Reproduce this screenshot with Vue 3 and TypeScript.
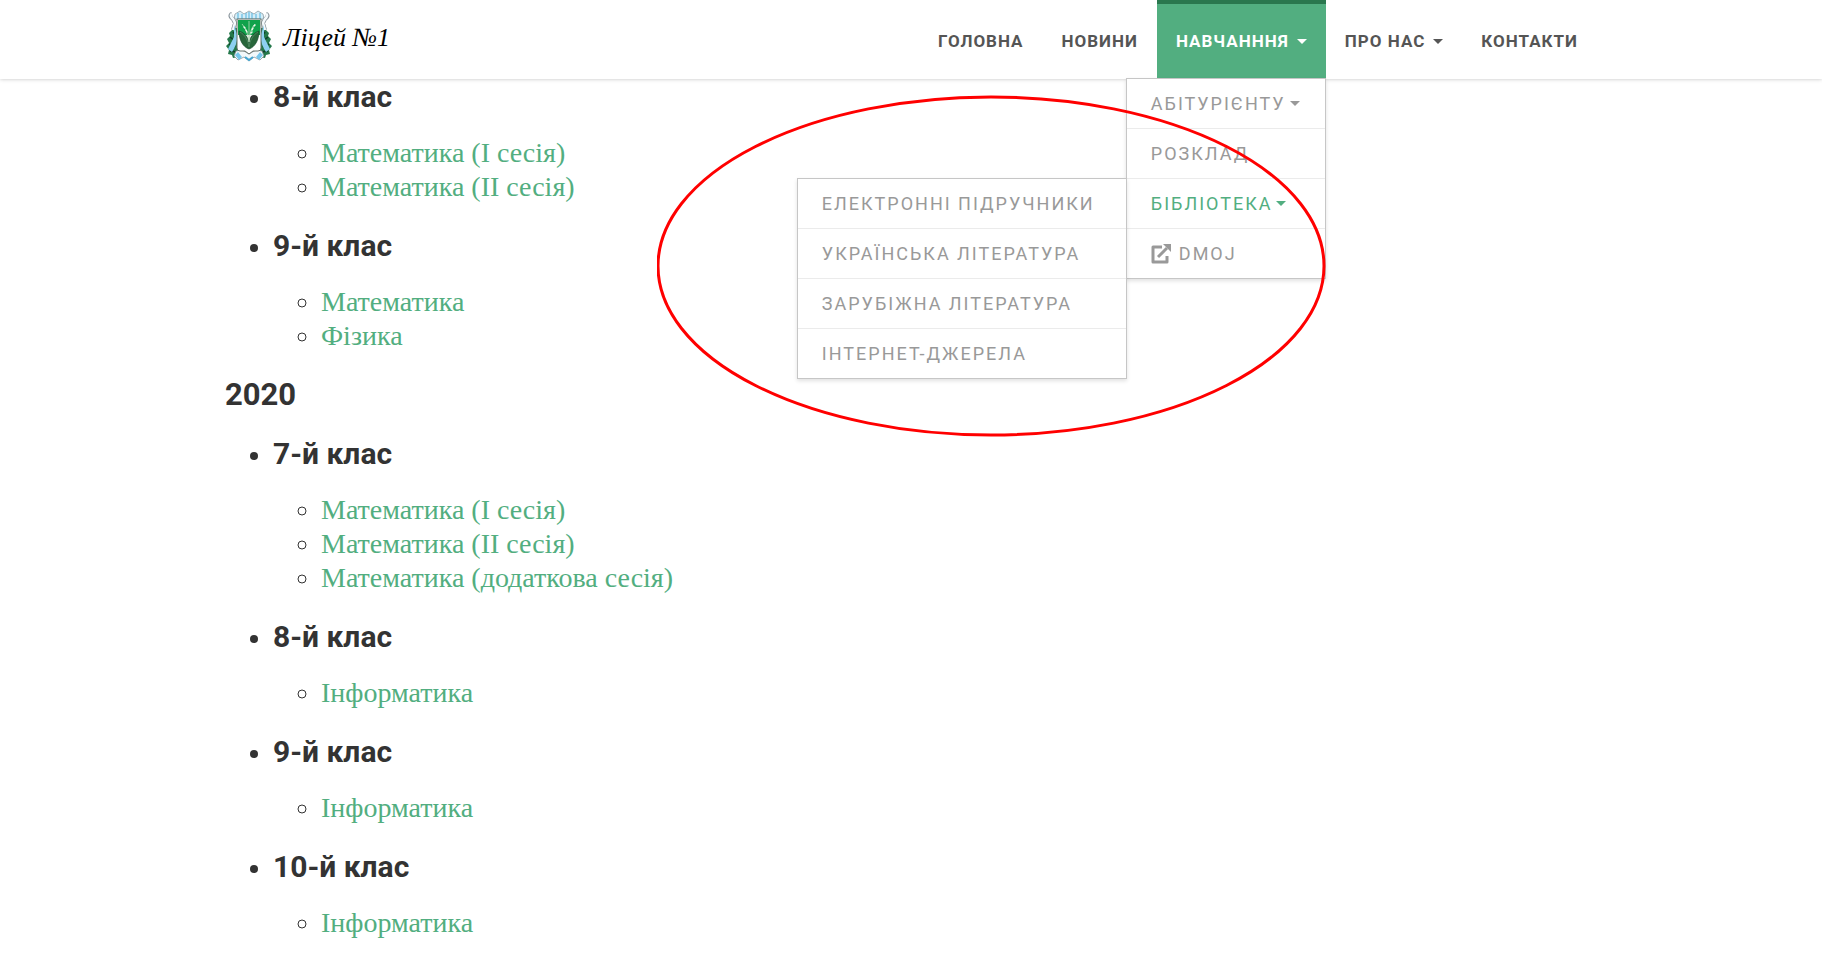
<script setup lang="ts">
interface NavItem {
  label: string
  caret?: boolean
  active?: boolean
}
interface MenuItem {
  label: string
  caret?: boolean
  open?: boolean
  external?: boolean
}
interface Grade {
  title: string
  subjects: string[]
}

const nav: NavItem[] = [
  { label: 'ГОЛОВНА' },
  { label: 'НОВИНИ' },
  { label: 'НАВЧАНННЯ', caret: true, active: true },
  { label: 'ПРО НАС', caret: true },
  { label: 'КОНТАКТИ' },
]

const menu: MenuItem[] = [
  { label: 'АБІТУРІЄНТУ', caret: true },
  { label: 'РОЗКЛАД' },
  { label: 'БІБЛІОТЕКА', caret: true, open: true },
  { label: 'DMOJ', external: true },
]

const library: string[] = [
  'ЕЛЕКТРОННІ ПІДРУЧНИКИ',
  'УКРАЇНСЬКА ЛІТЕРАТУРА',
  'ЗАРУБІЖНА ЛІТЕРАТУРА',
  'ІНТЕРНЕТ-ДЖЕРЕЛА',
]

const previous: Grade[] = [
  { title: '8-й клас', subjects: ['Математика (І сесія)', 'Математика (ІІ сесія)'] },
  { title: '9-й клас', subjects: ['Математика', 'Фізика'] },
]

const current: Grade[] = [
  { title: '7-й клас', subjects: ['Математика (І сесія)', 'Математика (ІІ сесія)', 'Математика (додаткова сесія)'] },
  { title: '8-й клас', subjects: ['Інформатика'] },
  { title: '9-й клас', subjects: ['Інформатика'] },
  { title: '10-й клас', subjects: ['Інформатика'] },
]
</script>

<template>
  <header class="header">
    <div class="container bar">
      <a class="brand" href="#">
        <svg class="crest" viewBox="0 0 48 52" aria-hidden="true">
          <path d="M9 18 4 23l1 3-3 3 2 4-3 3 3 4-1 4 4 1 1 3 5-1 3 2V18zM39 18l5 5-1 3 3 3-2 4 3 3-3 4 1 4-4 1-1 3-5-1-3 2V18z" fill="#24784a" />
          <path d="M5 27l5 4M4 34l6 3M5 41l7 1M43 27l-5 4M44 34l-6 3M43 41l-7 1M8 22l3 4M40 22l-3 4" stroke="#0f4029" stroke-width="1.5" />
          <path d="M10 4 15 1l4 3 5-3 5 3 4-3 5 3 1 5H9z" fill="#d5eef8" stroke="#8e9ea5" stroke-width=".8" />
          <path d="M13 3v6M17 4v5M21 3v6M24 2v7M27 3v6M31 4v5M35 3v6" stroke="#68bde3" stroke-width="1.2" />
          <path d="M7 4c-3 1-1 4 1 5l2 4-2 7M41 4c3 1 1 4-1 5l-2 4 2 7" fill="none" stroke="#89939a" stroke-width="4" />
          <path d="M7 4c-2 1-1 3 1 5l2 4-2 7M41 4c2 1 1 3-1 5l-2 4 2 7" fill="none" stroke="#f5fafc" stroke-width="2.6" />
          <path d="M9 15v12l-6 12 4 3c4-6 6-12 5-18zM39 15v12l6 12-4 3c-4-6-6-12-5-18z" fill="#8dd0f1" />
          <path d="M11 41l6-1 7 4 7-4 6 1 2 5-4 4-6-3-5 4-5-4-6 3-4-4z" fill="#f2f8fa" stroke="#78858c" stroke-width=".7" />
          <path d="M10 45l4 5 3-3-4-5zM38 45l-4 5-3-3 4-5z" fill="#76c6eb" />
          <path d="M12 9h24v29q0 3-3 3h-5l-4 3-4-3h-5q-3 0-3-3z" fill="#fff" stroke="#657169" />
          <path d="M13 10h22v15H13z" fill="#10a24b" />
          <path d="M14 21c6 2 9 6 10 12 1-6 4-10 10-12 0 9-4 16-10 18-6-2-10-9-10-18z" fill="#28663b" stroke="#154b2b" stroke-width=".7" />
          <path d="M24 37c-1-7-4-12-9-15M24 37c1-7 4-12 9-15" fill="none" stroke="#57916a" stroke-width=".7" />
          <path d="M24 32c-1-8-3-13-7-18M24 32c1-9 2-14 6-18M24 30V11" fill="none" stroke="#b5dab7" stroke-width=".8" />
          <path d="M19 17l1 1M21 20l1 2M30 15l-1 1M28 18l-1 2M27 22l-1 1" stroke="#e9f7ea" stroke-width="1.5" stroke-linecap="round" />
          <path d="M20 47l4 3 4-3" fill="none" stroke="#46a7d2" stroke-width="2" />
        </svg>
        <span class="brand-name">Ліцей №1</span>
      </a>
      <nav class="nav">
        <div v-for="item in nav" :key="item.label" class="nav-item">
          <a class="nav-link" :class="{ active: item.active }" href="#">
            {{ item.label }}<span v-if="item.caret" class="caret" />
          </a>
          <template v-if="item.active">
            <ul class="menu">
              <li v-for="entry in menu" :key="entry.label" class="menu-row">
                <a class="menu-link" :class="{ open: entry.open }" href="#">
                  <svg v-if="entry.external" class="external" viewBox="0 0 20 20" aria-hidden="true">
                    <path d="M11 3H2v15h14v-6" fill="none" stroke="currentColor" stroke-width="3" stroke-linejoin="round" />
                    <path d="M7 13 16 4" fill="none" stroke="currentColor" stroke-width="3" />
                    <path d="M12 0h8v8z" fill="currentColor" />
                  </svg>{{ entry.label }}<span v-if="entry.caret" class="caret" />
                </a>
                <ul v-if="entry.open" class="menu submenu">
                  <li v-for="book in library" :key="book" class="menu-row">
                    <a class="menu-link" href="#">{{ book }}</a>
                  </li>
                </ul>
              </li>
            </ul>
            <svg class="marker" viewBox="0 0 669 342" aria-hidden="true">
              <ellipse cx="334" cy="171" rx="333" ry="169" fill="none" stroke="#f00" stroke-width="3" />
            </svg>
          </template>
        </div>
      </nav>
    </div>
  </header>

  <main class="container content">
    <ul class="grades">
      <li v-for="grade in previous" :key="grade.title">
        <h3 class="grade">{{ grade.title }}</h3>
        <ul class="subjects">
          <li v-for="subject in grade.subjects" :key="subject"><a href="#">{{ subject }}</a></li>
        </ul>
      </li>
    </ul>
    <h2 class="year">2020</h2>
    <ul class="grades">
      <li v-for="grade in current" :key="grade.title">
        <h3 class="grade">{{ grade.title }}</h3>
        <ul class="subjects">
          <li v-for="subject in grade.subjects" :key="subject"><a href="#">{{ subject }}</a></li>
        </ul>
      </li>
    </ul>
  </main>
</template>

<style>
body {
  margin: 0;
  background: #fff;
}
</style>

<style scoped>
a {
  text-decoration: none;
}
ul {
  margin: 0;
}
.container {
  margin: 0 225px;
}
.header {
  position: relative;
  z-index: 1;
  background: #fff;
  box-shadow: 0 0 4px rgba(0, 0, 0, 0.25);
}
.bar {
  display: flex;
  justify-content: space-between;
  align-items: flex-start;
}
.brand {
  display: flex;
  align-items: flex-start;
  gap: 10px;
  padding-top: 10px;
  color: #000;
}
.crest {
  width: 48px;
  height: 52px;
}
.brand-name {
  font: italic 26px/56px "Liberation Serif", serif;
}
.nav {
  display: flex;
}
.nav-item {
  position: relative;
}
.nav-link {
  display: flex;
  align-items: center;
  padding: 0 19px;
  border-top: 4px solid transparent;
  font: 700 17px/75px Roboto, sans-serif;
  letter-spacing: 1px;
  color: #555;
}
.nav-link.active {
  border-top-color: #2a774e;
  background: #52ae80;
  color: #fff;
}
.caret {
  border: 5px solid transparent;
  border-top-color: currentColor;
  border-bottom: 0;
}
.nav-link .caret {
  margin-left: 8px;
}
.menu {
  position: absolute;
  top: 78px;
  right: 0;
  box-sizing: border-box;
  min-width: 200px;
  padding: 0;
  border: 1px solid #c6c6c6;
  background: #fff;
  box-shadow: 0 2px 4px rgba(0, 0, 0, 0.12);
  list-style: none;
}
.submenu {
  top: -1px;
  right: 100%;
  min-width: 330px;
}
.menu-row {
  position: relative;
  border-bottom: 1px solid #ebebeb;
}
.menu-row:last-child {
  border-bottom: 0;
}
.menu-link {
  display: flex;
  align-items: center;
  padding: 0 24px;
  font: 400 18px/49px Roboto, sans-serif;
  letter-spacing: 2px;
  white-space: nowrap;
  color: #999;
}
.menu-link.open {
  color: #52ae80;
}
.menu-link .caret {
  margin-left: 4px;
}
.external {
  width: 20px;
  height: 20px;
  margin-right: 8px;
}
.marker {
  position: absolute;
  top: 95px;
  right: 0;
  width: 669px;
  height: 342px;
  pointer-events: none;
}
.content {
  padding-top: 1px;
  color: #333;
  font: 28px/34px "Liberation Serif", serif;
}
.grades,
.subjects {
  padding-left: 48px;
}
.grades {
  list-style: disc;
}
.subjects {
  padding-bottom: 25px;
  list-style: circle;
}
.subjects a {
  color: #52ae80;
}
.grade {
  margin: 0 0 22px;
  font: 700 30px/34px Roboto, sans-serif;
}
.year {
  margin: 0 0 25px;
  font: 700 31px/34px Roboto, sans-serif;
}
</style>
